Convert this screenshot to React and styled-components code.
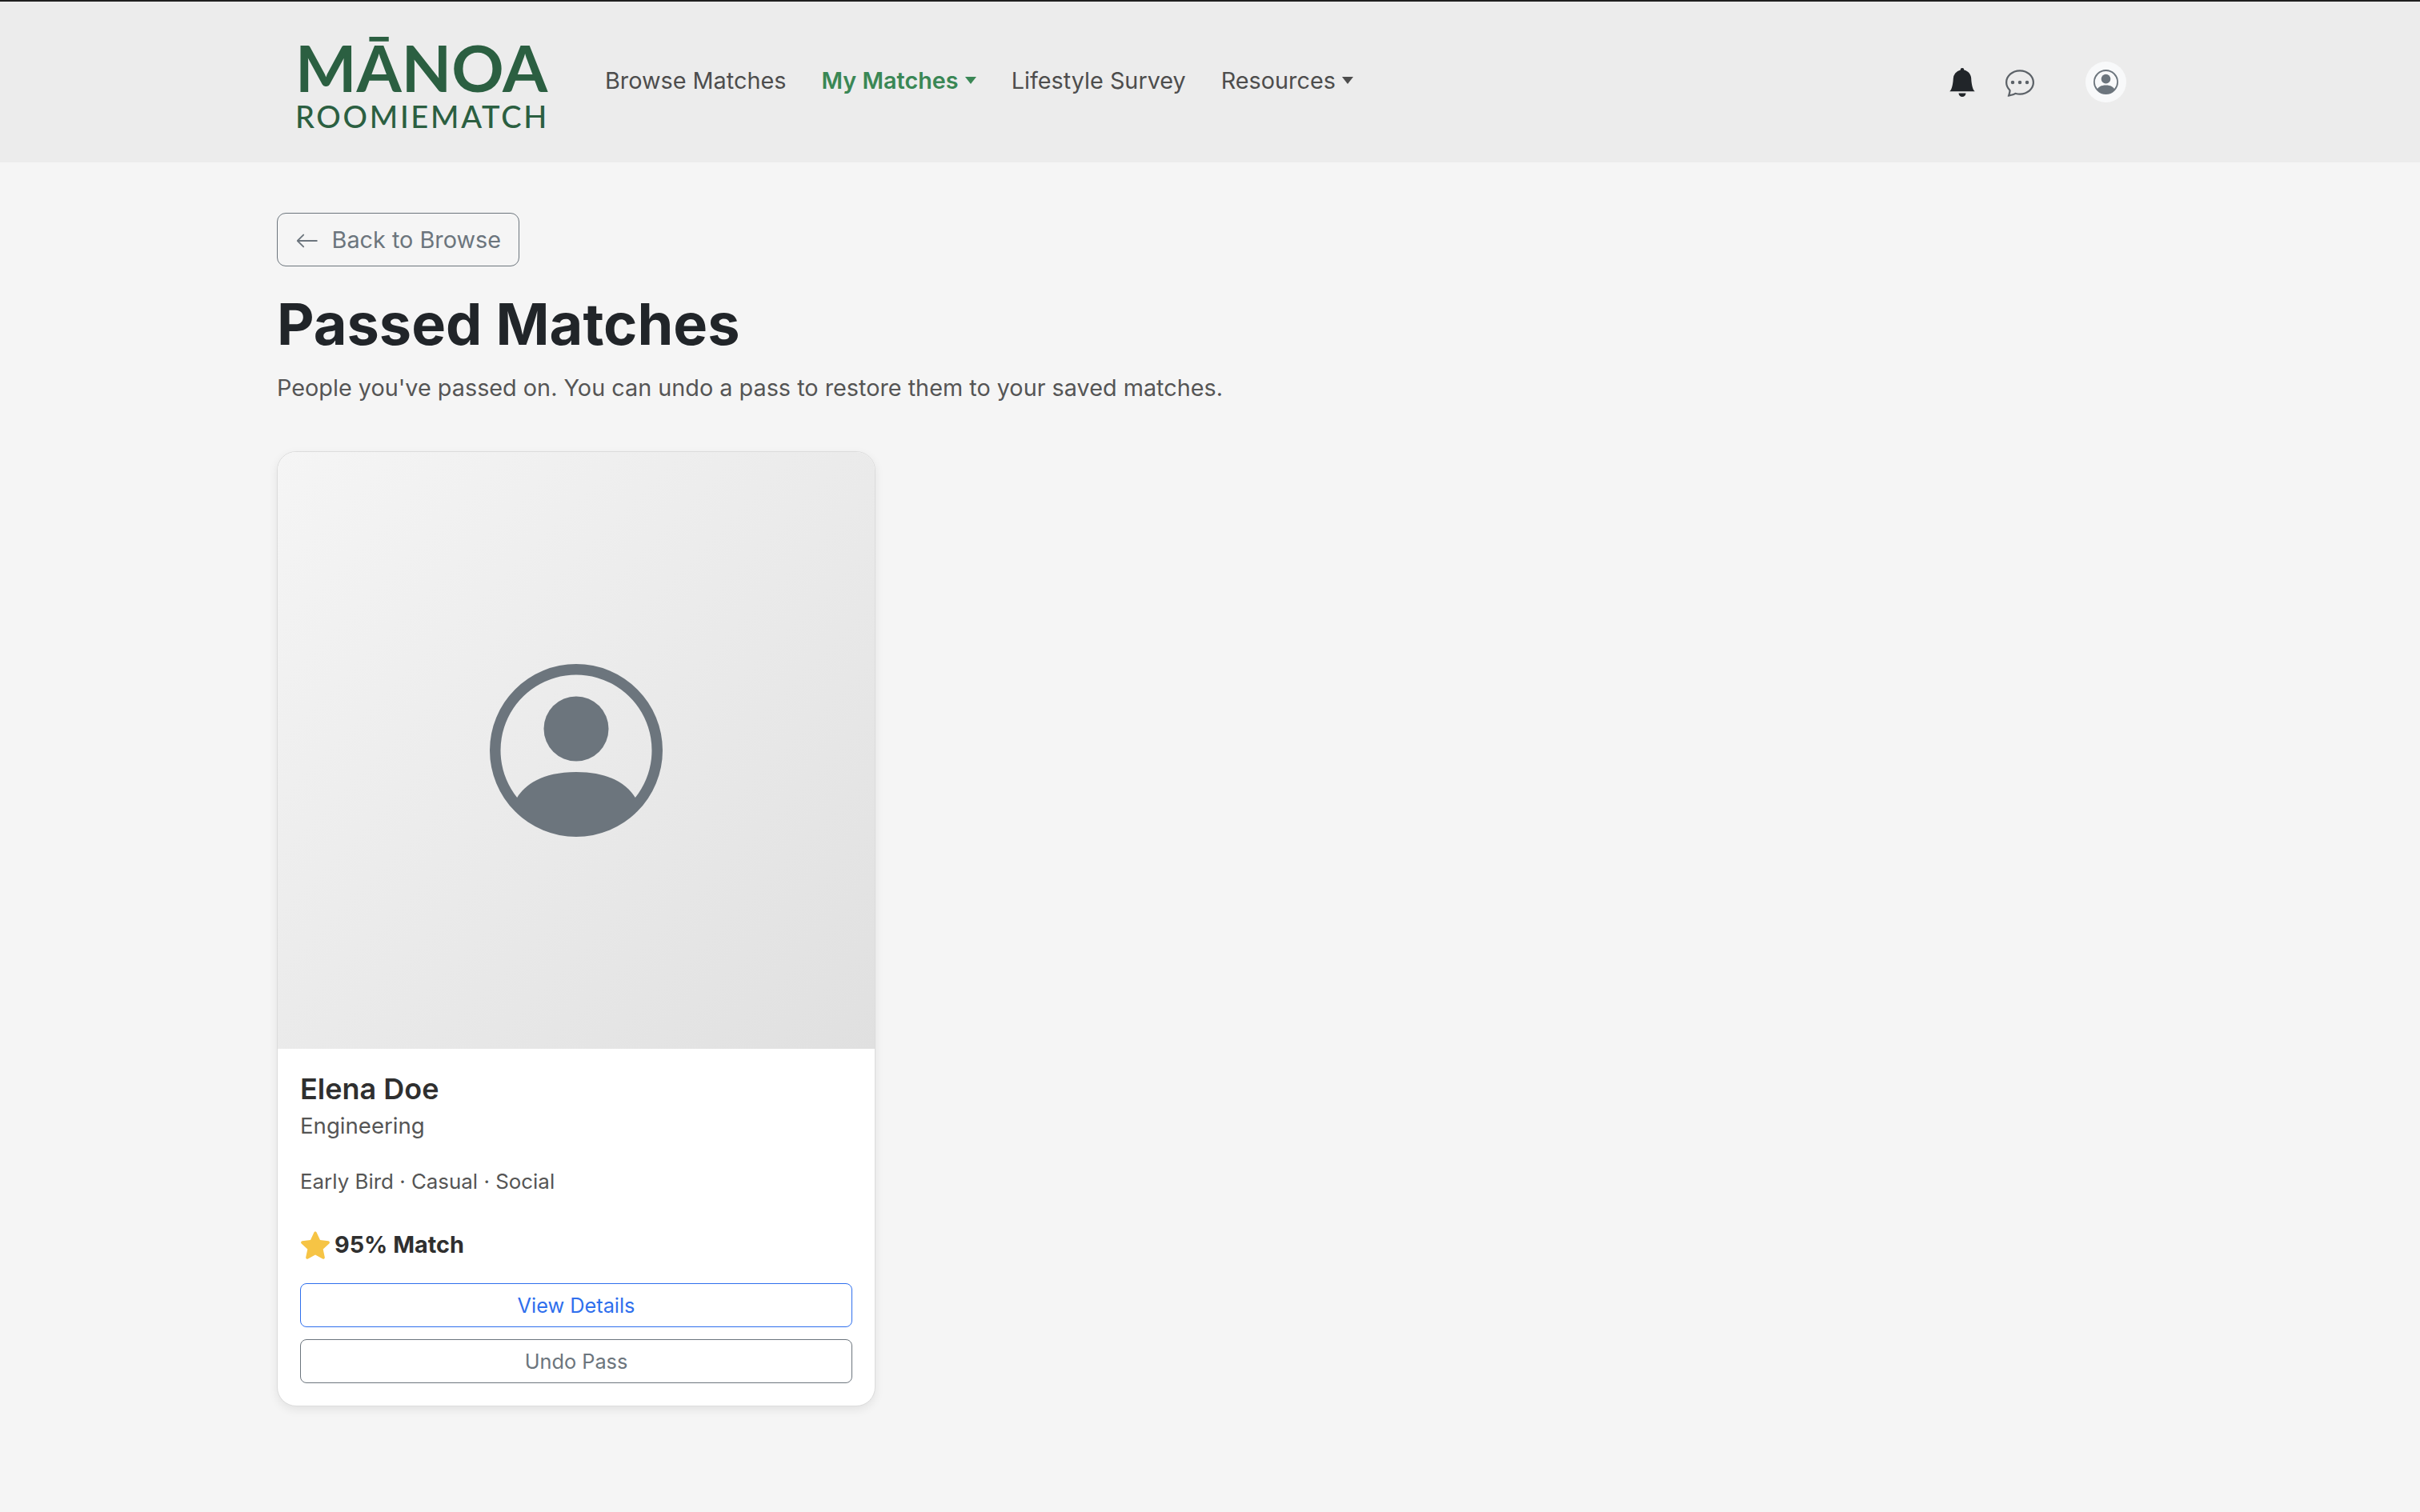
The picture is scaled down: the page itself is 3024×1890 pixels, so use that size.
import React from "react";
import styled, { createGlobalStyle } from "styled-components";
import { BsArrowLeft, BsBellFill, BsChatDots, BsPersonCircle } from "react-icons/bs";

const GlobalStyle = createGlobalStyle`
  * { box-sizing: border-box; }
  html, body { margin: 0; padding: 0; }
  body {
    font-family: "Inter", "Liberation Sans", sans-serif;
    background: #f5f5f5;
    color: #212529;
  }
  button { font-family: inherit; }
`;

const Page = styled.div`
  min-height: 1890px;
  background: #f5f5f5;
`;

const Navbar = styled.nav`
  height: 203px;
  background: #ececec;
  border-top: 2px solid #1f1f1f;
  display: flex;
  align-items: center;
  padding: 0 367px 0 369px;
`;

const Logo = styled.div`
  width: 312px;
  display: flex;
  flex-direction: column;
  align-items: flex-start;
  color: #2b5f41;
  font-family: "Lato", sans-serif;
  margin: 3px 75px 0 0;
`;

const LogoTop = styled.span`
  font-size: 81px;
  line-height: 82px;
  font-weight: 700;
  letter-spacing: 0;
  white-space: nowrap;
`;

const LogoBottom = styled.span`
  font-size: 38px;
  line-height: 40px;
  font-weight: 500;
  letter-spacing: 2.7px;
  white-space: nowrap;
`;

const NavLinks = styled.div`
  display: flex;
  align-items: center;
  gap: 44px;
  flex: 1;
  margin-bottom: 4px;
`;

const NavLink = styled.a`
  display: inline-flex;
  align-items: center;
  font-size: 28.8px;
  line-height: 40px;
  white-space: nowrap;
  color: ${({ $active }) => ($active ? "#3a8755" : "#4d4d4d")};
  font-weight: ${({ $active }) => ($active ? 600 : 400)};
`;

const Caret = styled.span`
  width: 0;
  height: 0;
  margin-left: 8px;
  border-top: 9px solid currentColor;
  border-left: 7px solid transparent;
  border-right: 7px solid transparent;
`;

const NavIcons = styled.div`
  display: flex;
  align-items: center;
  font-size: 36px;
`;

const IconLink = styled.span`
  display: inline-flex;
  color: ${({ $color }) => $color};
  margin-left: ${({ $gap }) => $gap}px;
`;

const Avatar = styled.span`
  width: 51px;
  height: 51px;
  margin-left: 64px;
  border-radius: 50%;
  background: #f8f9fa;
  color: #6c757d;
  display: inline-flex;
  align-items: center;
  justify-content: center;
  font-size: 31px;
`;

const Content = styled.main`
  padding: 63px 346px 0;
`;

const BackButton = styled.button`
  height: 67px;
  width: 303px;
  padding: 0 22px;
  display: flex;
  align-items: center;
  gap: 16px;
  background: transparent;
  border: 1px solid #6c757d;
  border-radius: 11px;
  color: #6c757d;
  font-size: 28.8px;
  white-space: nowrap;

  svg {
    font-size: 32px;
    margin-top: 3px;
  }
`;

const Title = styled.h1`
  margin: 28px 0 0;
  font-size: 72px;
  line-height: 88px;
  font-weight: 700;
  color: #212529;
`;

const Subtitle = styled.p`
  margin: 14px 0 0;
  font-size: 28.8px;
  line-height: 44px;
  color: #555;
`;

const Card = styled.article`
  width: 748px;
  margin-top: 57px;
  background: #fff;
  border: 1px solid #dcdcdc;
  border-radius: 24px;
  overflow: hidden;
  box-shadow: 0 4px 12px rgba(0, 0, 0, 0.08);
`;

const Photo = styled.div`
  height: 746px;
  display: flex;
  align-items: center;
  justify-content: center;
  background: linear-gradient(135deg, #f5f5f5, #e0e0e0);
  color: #6c757d;
  font-size: 216px;
`;

const CardBody = styled.div`
  padding: 26px 28px 28px;
  display: flex;
  flex-direction: column;
`;

const Name = styled.h3`
  margin: 0;
  font-size: 36px;
  line-height: 48px;
  font-weight: 600;
  color: #2f2f2f;
`;

const Major = styled.div`
  margin-top: 1px;
  font-size: 27.6px;
  line-height: 42px;
  color: #555;
`;

const Traits = styled.div`
  margin-top: 29px;
  font-size: 25.9px;
  line-height: 40px;
  color: #555;
`;

const MatchRow = styled.div`
  margin-top: 37px;
  display: flex;
  align-items: center;
  gap: 5px;
  font-size: 28.8px;
  line-height: 44px;
  font-weight: 700;
  color: #2f2f2f;
`;

const ActionButton = styled.button`
  height: 55px;
  width: 100%;
  margin-top: ${({ $top }) => $top}px;
  background: #fff;
  border: 1px solid ${({ $color }) => $color};
  border-radius: 8px;
  color: ${({ $color }) => $color};
  font-size: 25.3px;
`;

const Star = () => (
  <svg width="38" height="36" viewBox="0 0 38 36" aria-hidden="true">
    <path
      d="M19 1.5c.8 0 1.4.5 1.7 1.2l4.3 9.4 10.3 1.2c1.6.2 2.2 2.1 1 3.2l-7.6 7 2.1 10.1c.3 1.6-1.3 2.8-2.7 2l-9.1-5.1-9.1 5.1c-1.4.8-3-.4-2.7-2l2.1-10.1-7.6-7c-1.2-1.1-.6-3 1-3.2l10.3-1.2 4.3-9.4c.3-.7.9-1.2 1.7-1.2z"
      fill="#f6c445"
    />
  </svg>
);

const App = () => {
  return (
    <Page>
      <GlobalStyle />
      <Navbar>
        <Logo>
          <LogoTop>MĀNOA</LogoTop>
          <LogoBottom>ROOMIEMATCH</LogoBottom>
        </Logo>
        <NavLinks>
          <NavLink>Browse Matches</NavLink>
          <NavLink $active>
            My Matches
            <Caret />
          </NavLink>
          <NavLink>Lifestyle Survey</NavLink>
          <NavLink>
            Resources
            <Caret />
          </NavLink>
        </NavLinks>
        <NavIcons>
          <IconLink $color="#212529">
            <BsBellFill />
          </IconLink>
          <IconLink $color="#5c6268" $gap={36}>
            <BsChatDots />
          </IconLink>
          <Avatar>
            <BsPersonCircle />
          </Avatar>
        </NavIcons>
      </Navbar>
      <Content>
        <BackButton>
          <BsArrowLeft />
          Back to Browse
        </BackButton>
        <Title>Passed Matches</Title>
        <Subtitle>People you've passed on. You can undo a pass to restore them to your saved matches.</Subtitle>
        <Card>
          <Photo>
            <BsPersonCircle />
          </Photo>
          <CardBody>
            <Name>Elena Doe</Name>
            <Major>Engineering</Major>
            <Traits>Early Bird · Casual · Social</Traits>
            <MatchRow>
              <Star />
              95% Match
            </MatchRow>
            <ActionButton $color="#2f6fed" $top={26}>View Details</ActionButton>
            <ActionButton $color="#6c757d" $top={15}>Undo Pass</ActionButton>
          </CardBody>
        </Card>
      </Content>
    </Page>
  );
};

export default App;
